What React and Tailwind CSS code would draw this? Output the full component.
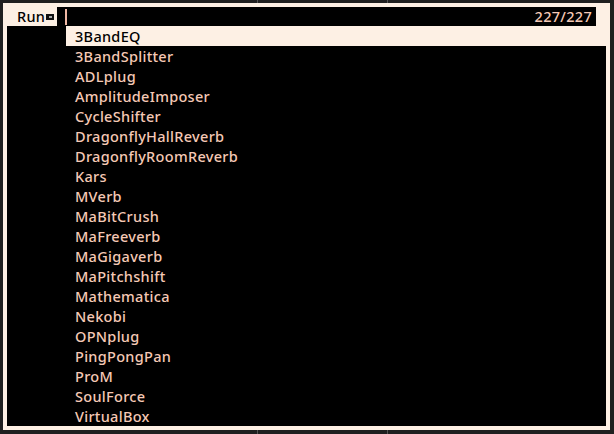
const apps = [
  "3BandEQ",
  "3BandSplitter",
  "ADLplug",
  "AmplitudeImposer",
  "CycleShifter",
  "DragonflyHallReverb",
  "DragonflyRoomReverb",
  "Kars",
  "MVerb",
  "MaBitCrush",
  "MaFreeverb",
  "MaGigaverb",
  "MaPitchshift",
  "Mathematica",
  "Nekobi",
  "OPNplug",
  "PingPongPan",
  "ProM",
  "SoulForce",
  "VirtualBox",
];

const font = { fontFamily: "'Noto Sans', 'Open Sans', sans-serif" };

export default function App() {
  return (
    <div className="relative w-[614px] h-[434px] bg-[#202020] overflow-hidden" style={font}>
      {/* background window dividers */}
      <div className="absolute left-[257px] top-0 h-full w-px bg-[#555]" />
      <div className="absolute left-[387px] top-0 h-full w-px bg-[#555]" />

      <div className="absolute left-[3px] top-[3px] w-[607px] h-[427px] bg-[#fdf0e4] p-[4px]">
        <div className="flex flex-col h-full">
          {/* prompt row */}
          <div className="flex h-[20px] bg-[#fdf0e4]">
            <div className="w-[50px] flex items-center pl-[10px] text-[14.5px] tracking-[0.3px] font-medium text-black leading-none">
              Run
              <span className="ml-[1px] mt-[1px] w-[8px] h-[6px] bg-[#111] flex items-center justify-center">
                <span className="w-[3px] h-[2px] bg-[#aaa]" />
              </span>
            </div>
            <div className="flex-1 mr-[10px] bg-black flex items-center justify-between pl-[8px] pr-[4px]">
              <span className="w-[2px] h-[16px] bg-[#f0b8a4]" />
              <span className="text-[14.5px] tracking-[0.3px] font-medium text-[#f5c9b5] leading-none">227/227</span>
            </div>
          </div>

          {/* list */}
          <div className="flex-1 bg-black">
            {apps.map((name, i) => (
              <div key={name} className="h-[20px] flex">
                <div className="w-[59px]" />
                <div
                  className={
                    "flex-1 flex items-center pl-[9px] text-[14.5px] tracking-[0.3px] font-medium leading-none " +
                    (i === 0 ? "bg-[#fdf0e4] text-black" : "text-[#f5c9b5]")
                  }
                >
                  {name}
                </div>
              </div>
            ))}
          </div>
        </div>
      </div>
    </div>
  );
}
